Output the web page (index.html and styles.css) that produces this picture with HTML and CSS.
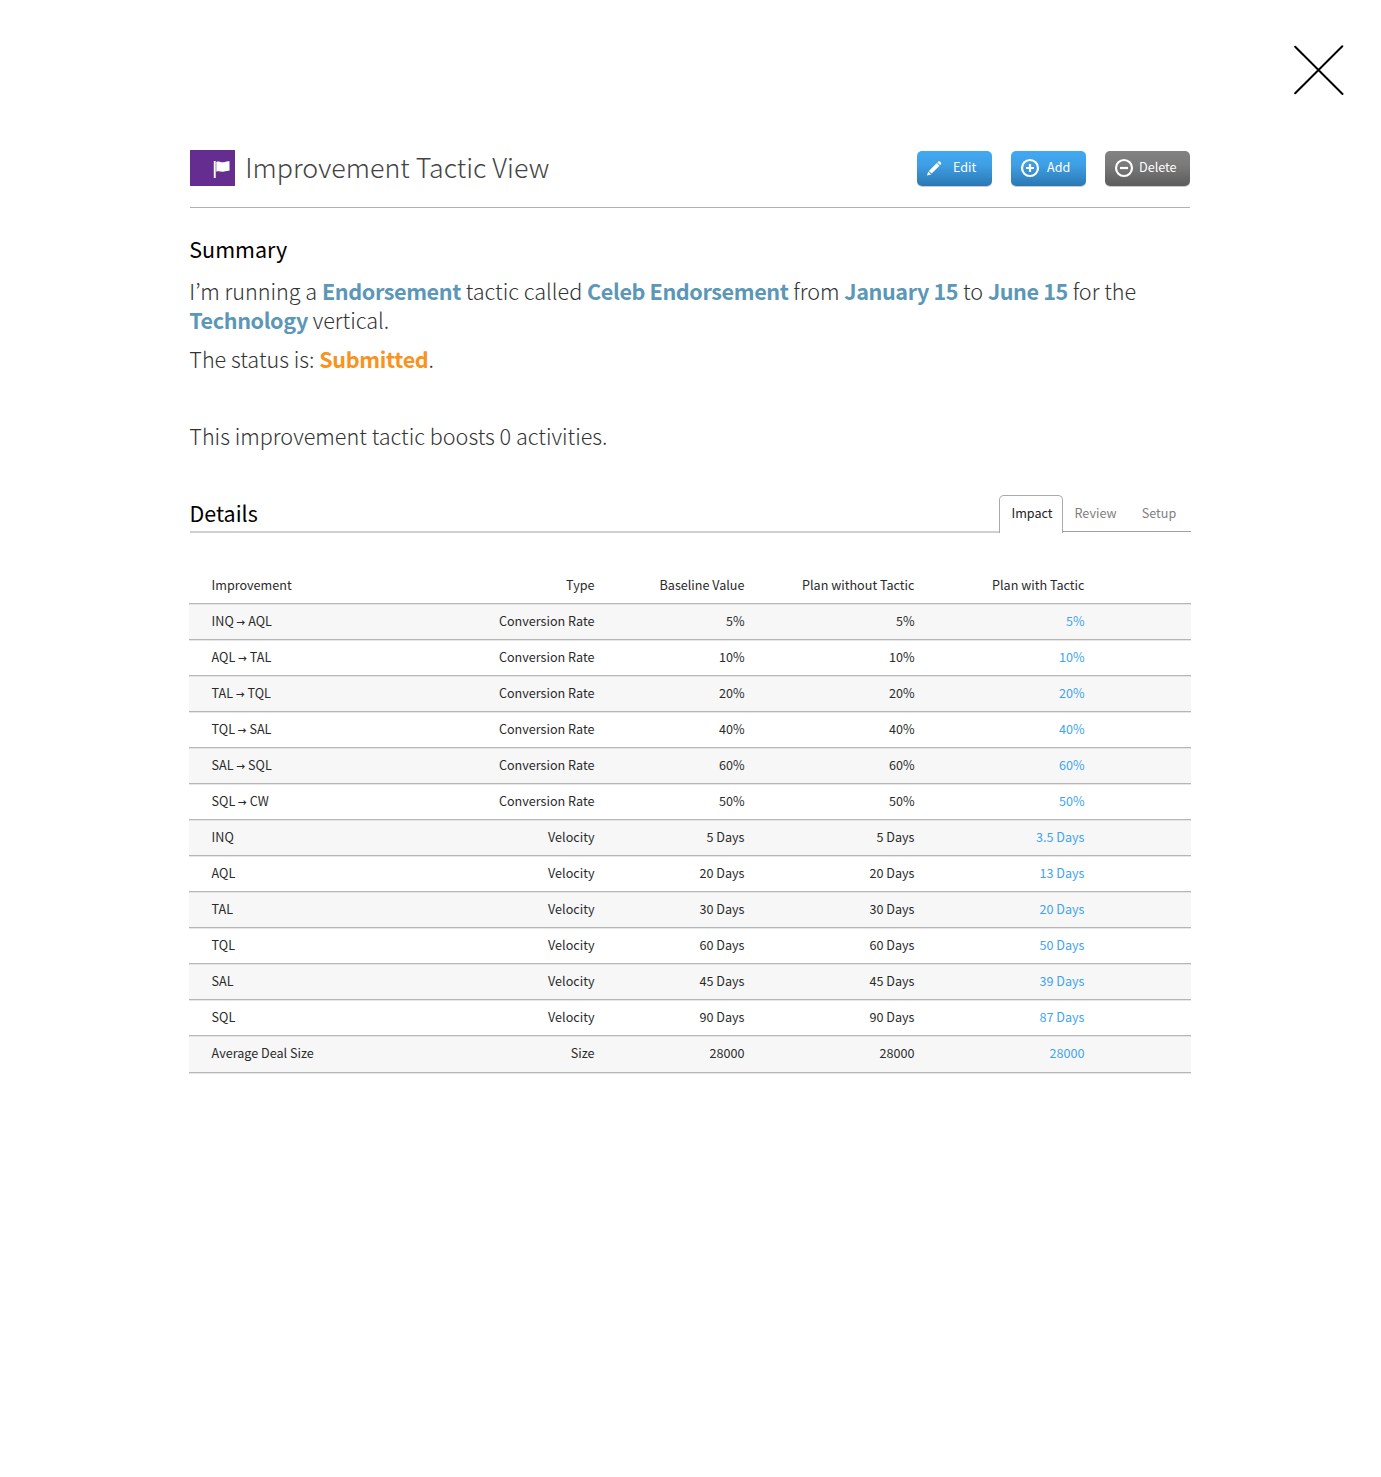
FILE: index.html
```
<!DOCTYPE html>
<html lang="en">
<head>
<meta charset="utf-8">
<title>Improvement Tactic View</title>
<link rel="stylesheet" href="styles.css">
</head>
<body>
<button class="close" aria-label="Close"><svg width="50" height="50" viewBox="0 0 50 50"><path d="M1.200 1.700L48.500 49M48.300 1.200L1.200 48.300" stroke="#000" stroke-width="2" stroke-linecap="round"/></svg></button>
<main class="page">
  <header class="page-header">
    <span class="badge"><svg width="18" height="18" viewBox="0 0 18 18" fill="#fff"><path d="M.8 1h1.900V18H.8zM3.300 2c2.300-1.300 4.200.4 6.600.3 2.200-.1 3.800-1.600 6.600-1V10.800c-2.600-.5-4.400.8-6.600.9-2.400.1-4.300-1.200-6.600 0z"/></svg></span>
    <h1 class="title">Improvement Tactic View</h1>
    <div class="actions">
      <button class="btn btn-blue"><svg class="icon" width="20" height="20" viewBox="0 0 20 20"><path d="M1 17.600l1.200-4.200 2.900 3zM2.900 12.900L10.800 5l2.700 2.700L5.700 15.600zM11.400 4.400l.9-.9c1.100-1 3.700 1.600 2.700 2.700l-.9.900z" fill="#fff"/></svg><span class="label">Edit</span></button>
      <button class="btn btn-blue"><svg class="icon" width="20" height="20" viewBox="0 0 20 20" fill="none" stroke="#fff" stroke-width="2.200"><circle cx="10" cy="10" r="8"/><path d="M10 6v8M6 10h8"/></svg><span class="label">Add</span></button>
      <button class="btn btn-gray"><svg class="icon" width="20" height="20" viewBox="0 0 20 20" fill="none" stroke="#fff" stroke-width="2.200"><circle cx="10" cy="10" r="8"/><path d="M6 10h8"/></svg><span class="label">Delete</span></button>
    </div>
  </header>
  <section class="summary">
    <h2 class="heading">Summary</h2>
    <p class="text">I’m running a <b>Endorsement</b> tactic called <b>Celeb Endorsement</b> from <b>January 15</b> to <b>June 15</b> for the <b>Technology</b> vertical.</p>
    <p class="text follow">The status is: <b class="status">Submitted</b>.</p>
    <p class="text boosts">This improvement tactic boosts 0 activities.</p>
  </section>
  <section class="details">
    <div class="details-bar">
      <h2 class="heading">Details</h2>
      <nav class="tabs"><a class="tab active">Impact</a><a class="tab review">Review</a><a class="tab setup">Setup</a></nav>
    </div>
    <table class="grid">
      <colgroup><col class="c-name"><col class="c-type"><col class="c-base"><col class="c-plan"><col class="c-plan"><col></colgroup>
      <thead><tr><th>Improvement</th><th>Type</th><th>Baseline Value</th><th>Plan without Tactic</th><th>Plan with Tactic</th><th></th></tr></thead>
      <tbody>
        <tr><td>INQ <i>→</i> AQL</td><td>Conversion Rate</td><td>5%</td><td>5%</td><td>5%</td><td></td></tr>
        <tr><td>AQL <i>→</i> TAL</td><td>Conversion Rate</td><td>10%</td><td>10%</td><td>10%</td><td></td></tr>
        <tr><td>TAL <i>→</i> TQL</td><td>Conversion Rate</td><td>20%</td><td>20%</td><td>20%</td><td></td></tr>
        <tr><td>TQL <i>→</i> SAL</td><td>Conversion Rate</td><td>40%</td><td>40%</td><td>40%</td><td></td></tr>
        <tr><td>SAL <i>→</i> SQL</td><td>Conversion Rate</td><td>60%</td><td>60%</td><td>60%</td><td></td></tr>
        <tr><td>SQL <i>→</i> CW</td><td>Conversion Rate</td><td>50%</td><td>50%</td><td>50%</td><td></td></tr>
        <tr><td>INQ</td><td>Velocity</td><td>5 Days</td><td>5 Days</td><td>3.5 Days</td><td></td></tr>
        <tr><td>AQL</td><td>Velocity</td><td>20 Days</td><td>20 Days</td><td>13 Days</td><td></td></tr>
        <tr><td>TAL</td><td>Velocity</td><td>30 Days</td><td>30 Days</td><td>20 Days</td><td></td></tr>
        <tr><td>TQL</td><td>Velocity</td><td>60 Days</td><td>60 Days</td><td>50 Days</td><td></td></tr>
        <tr><td>SAL</td><td>Velocity</td><td>45 Days</td><td>45 Days</td><td>39 Days</td><td></td></tr>
        <tr><td>SQL</td><td>Velocity</td><td>90 Days</td><td>90 Days</td><td>87 Days</td><td></td></tr>
        <tr><td>Average Deal Size</td><td>Size</td><td>28000</td><td>28000</td><td>28000</td><td></td></tr>
      </tbody>
    </table>
  </section>
</main>
</body>
</html>
```
FILE: styles.css
```
* { box-sizing: border-box; }
body { margin: 0; min-height: 1477px; background: #fff; color: #333; font-family: "Noto Sans CJK KR", sans-serif; font-size: 12.6px; position: relative; }
button { border: 0; background: none; padding: 0; font: inherit; }
.close { position: absolute; left: 1294px; top: 45px; width: 50px; height: 50px; }
.close svg { display: block; }
.page { width: 1002px; margin: 0 0 0 189px; padding-top: 150px; }

.page-header { display: flex; height: 58px; margin: 0 1px; border-bottom: 1px solid #aeb1b1; align-items: flex-start; }
.badge { width: 45px; height: 36px; background: #662d91; display: flex; padding: 10px 0 0 23px; }
.title { margin: 0 0 0 10.3px; font-size: 26.8px; font-weight: 300; line-height: 34px; color: #444; }
.actions { display: flex; gap: 19px; margin: 1px 0 0 auto; }
.btn { display: flex; align-items: flex-start; width: 75px; height: 35px; border-radius: 5px; color: #fff; padding: 7px 0 0 9px; box-shadow: 0 1px 0 #ccc; }
.btn .label { line-height: 20px; margin: -1px 0 0 7px; }
.btn-blue { background: linear-gradient(#40a9f4, #3f9fe4 40%, #2b78b3); }
.btn-gray { width: 85px; background: linear-gradient(#828282, #7a7a7a 40%, #5c5c5c); }
.btn-gray .label { margin-left: 5px; }

.heading { margin: 0; font-size: 21.5px; font-weight: 400; color: #000; line-height: 30px; }
.summary { margin: 26px 1px 0 .3px; }
.text { margin: 12px 0 0; max-width: 960px; font-size: 21.6px; line-height: 29px; font-weight: 300; }
.text.follow { margin-top: 10px; }
.text.boosts { margin-top: 48px; }
.text b { color: #5b97b7; font-weight: 700; letter-spacing: -.4px; }
.text .status { color: #f7931e; letter-spacing: -.34px; }

.details { margin-top: 45px; }
.details-bar { display: flex; align-items: flex-start; }
.details-bar .heading { width: 809px; height: 38px; margin-left: 1px; padding-top: 3px; text-indent: -.5px; border-bottom: 2px solid #d0d0d0; }
.tabs { display: flex; flex: 1; align-items: flex-start; }
.tab { height: 37px; line-height: 35px; border-bottom: 1px solid #a0a0a0; color: #808080; }
.tab.active { width: 64px; height: 38px; line-height: 33px; padding-left: 11.500px; border: 1px solid #aaa; border-bottom: 0; border-radius: 5px 5px 0 0; color: #222; }
.review { width: 67px; padding-left: 11.500px; }
.setup { flex: 1; padding-left: 11.700px; }

.grid { width: 1002px; margin-top: 34px; border-collapse: separate; border-spacing: 0; table-layout: fixed; color: #2a2a2a; }
.c-name { width: 200px; }
.c-type { width: 206px; }
.c-base { width: 150px; }
.c-plan { width: 170px; }
th, td { padding: 0 .5px 0 0; text-align: right; vertical-align: top; white-space: nowrap; font-weight: 400; }
th { height: 36px; line-height: 36px; }
td { height: 36px; line-height: 33px; border-top: 1px solid #b6b6b6; box-shadow: inset 0 1px 0 #e6e6e6; }
th:first-child, td:first-child { padding-left: 22.600px; text-align: left; }
td:nth-child(5) { color: #3fa4ee; }
td i { font-style: normal; font-weight: 700; font-size: 8.8px; line-height: 0; }
tbody tr:nth-child(odd) td { background: #f7f7f7; }
tbody tr:last-child td { height: 38px; border-bottom: 1px solid #b6b6b6; box-shadow: inset 0 1px 0 #e6e6e6, 0 1px 0 #e6e6e6; }
```
